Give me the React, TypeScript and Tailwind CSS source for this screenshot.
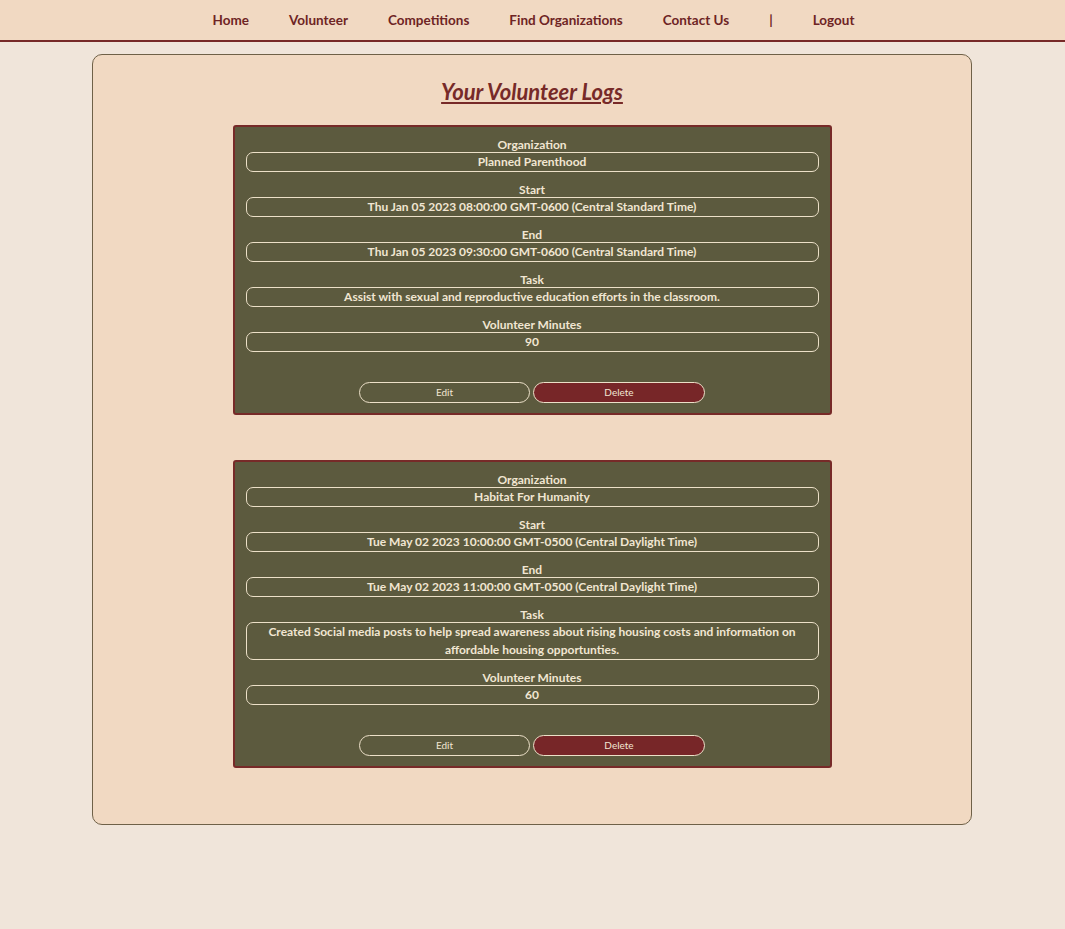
const logs = [
  {
    org: 'Planned Parenthood',
    start: 'Thu Jan 05 2023 08:00:00 GMT-0600 (Central Standard Time)',
    end: 'Thu Jan 05 2023 09:30:00 GMT-0600 (Central Standard Time)',
    task: 'Assist with sexual and reproductive education efforts in the classroom.',
    minutes: '90',
  },
  {
    org: 'Habitat For Humanity',
    start: 'Tue May 02 2023 10:00:00 GMT-0500 (Central Daylight Time)',
    end: 'Tue May 02 2023 11:00:00 GMT-0500 (Central Daylight Time)',
    task: 'Created Social media posts to help spread awareness about rising housing costs and information on affordable housing opportunties.',
    minutes: '60',
  },
];

const navItems = ['Home', 'Volunteer', 'Competitions', 'Find Organizations', 'Contact Us', '|', 'Logout'];

function Field({ label, value }: { label: string; value: string }) {
  return (
    <div className="flex flex-col items-center">
      <div className="leading-[15px]">{label}</div>
      <div className="w-full border border-[#ece0c8] rounded-[7px] px-3 leading-[18px] text-center">{value}</div>
    </div>
  );
}

function LogCard({ log }: { log: (typeof logs)[number] }) {
  return (
    <div className="w-[599px] bg-[#5c5a3e] border-2 border-[#772a28] rounded-[3px] px-[11px] pt-[10px] pb-[10px] text-[#f1e6d2] text-[12px] font-bold">
      <div className="flex flex-col gap-[10px]">
        <Field label="Organization" value={log.org} />
        <Field label="Start" value={log.start} />
        <Field label="End" value={log.end} />
        <Field label="Task" value={log.task} />
        <Field label="Volunteer Minutes" value={log.minutes} />
      </div>
      <div className="flex justify-center gap-[3px] mt-[30px]">
        <button className="w-[171px] h-[21px] rounded-full border border-[#ece0c8] text-[10px] font-normal text-[#f1e6d2]">
          Edit
        </button>
        <button className="w-[172px] h-[21px] rounded-full border border-[#ece0c8] bg-[#772628] text-[10px] font-normal text-[#f1e6d2]">
          Delete
        </button>
      </div>
    </div>
  );
}

export default function App() {
  return (
    <div className="min-h-[929px] bg-[#f0e5da] font-['Lato',sans-serif]">
      <nav className="h-[42px] bg-[#f1d9c2] border-b-2 border-[#772a28] flex justify-center items-center gap-10 text-[13.5px] font-bold text-[#6e2424] pl-[2px]">
        {navItems.map((n) => (
          <span key={n}>{n}</span>
        ))}
      </nav>
      <div className="flex justify-center pt-[12px] pr-[1px]">
        <main className="w-[880px] h-[771px] bg-[#f1d9c2] border border-[#6f6148] rounded-[10px] flex flex-col items-center pt-[22px]">
          <h1 className="text-[22px] font-bold italic underline text-[#772a28] leading-[30px] mb-[18px]">
            Your Volunteer Logs
          </h1>
          <div className="flex flex-col gap-[45px]">
            {logs.map((log) => (
              <LogCard key={log.org} log={log} />
            ))}
          </div>
        </main>
      </div>
    </div>
  );
}
